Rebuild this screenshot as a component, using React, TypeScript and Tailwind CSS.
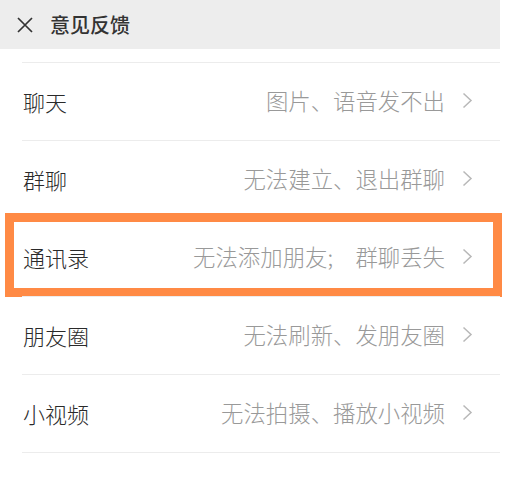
import React from "react";

const rows = [
  { label: "聊天", desc: "图片、语音发不出" },
  { label: "群聊", desc: "无法建立、退出群聊" },
  { label: "通讯录", desc: "无法添加朋友;\u3000群聊丢失", highlight: true },
  { label: "朋友圈", desc: "无法刷新、发朋友圈" },
  { label: "小视频", desc: "无法拍摄、播放小视频" },
];

function Chevron() {
  return (
    <svg width="11" height="17" viewBox="0 0 11 17" className="ml-[17px] shrink-0">
      <path d="M1.5 1.5 L9 8.5 L1.5 15.5" fill="none" stroke="#b8b8b8" strokeWidth="1.5" />
    </svg>
  );
}

export default function App() {
  return (
    <div
      className="w-[512px] h-[477px] bg-white overflow-hidden relative"
      style={{ fontFamily: '"Noto Sans CJK SC", "Noto Sans", sans-serif' }}
    >
      <div className="w-[500px] h-[49px] bg-[#ededed] flex items-center pl-[16px]">
        <svg width="18" height="18" viewBox="0 0 18 18">
          <path d="M2 2 L16 16 M16 2 L2 16" stroke="#333" strokeWidth="1.7" fill="none" />
        </svg>
        <span className="ml-[16px] text-[20px] font-medium text-[#333] leading-none">意见反馈</span>
      </div>
      <div className="h-[13px]" />
      <div className="w-[500px]">
        {rows.map((r) => (
          <div key={r.label} className="relative">
            <div className="ml-[22px] h-px bg-[#ececec]" />
            <div className="h-[77px] flex items-center pl-[23px] pr-[27px] pb-[2px]">
              <span className="text-[22px] font-light text-[#2a2a2a] leading-none">{r.label}</span>
              <span className="ml-auto text-[22.4px] font-light text-[#999] leading-none whitespace-pre">{r.desc}</span>
              <Chevron />
            </div>
            {r.highlight && (
              <div className="absolute left-[5px] top-[-5px] w-[497px] h-[84px] border-[9px] border-[#ff8a45]" />
            )}
          </div>
        ))}
        <div className="ml-[22px] h-px bg-[#ececec]" />
      </div>
    </div>
  );
}
